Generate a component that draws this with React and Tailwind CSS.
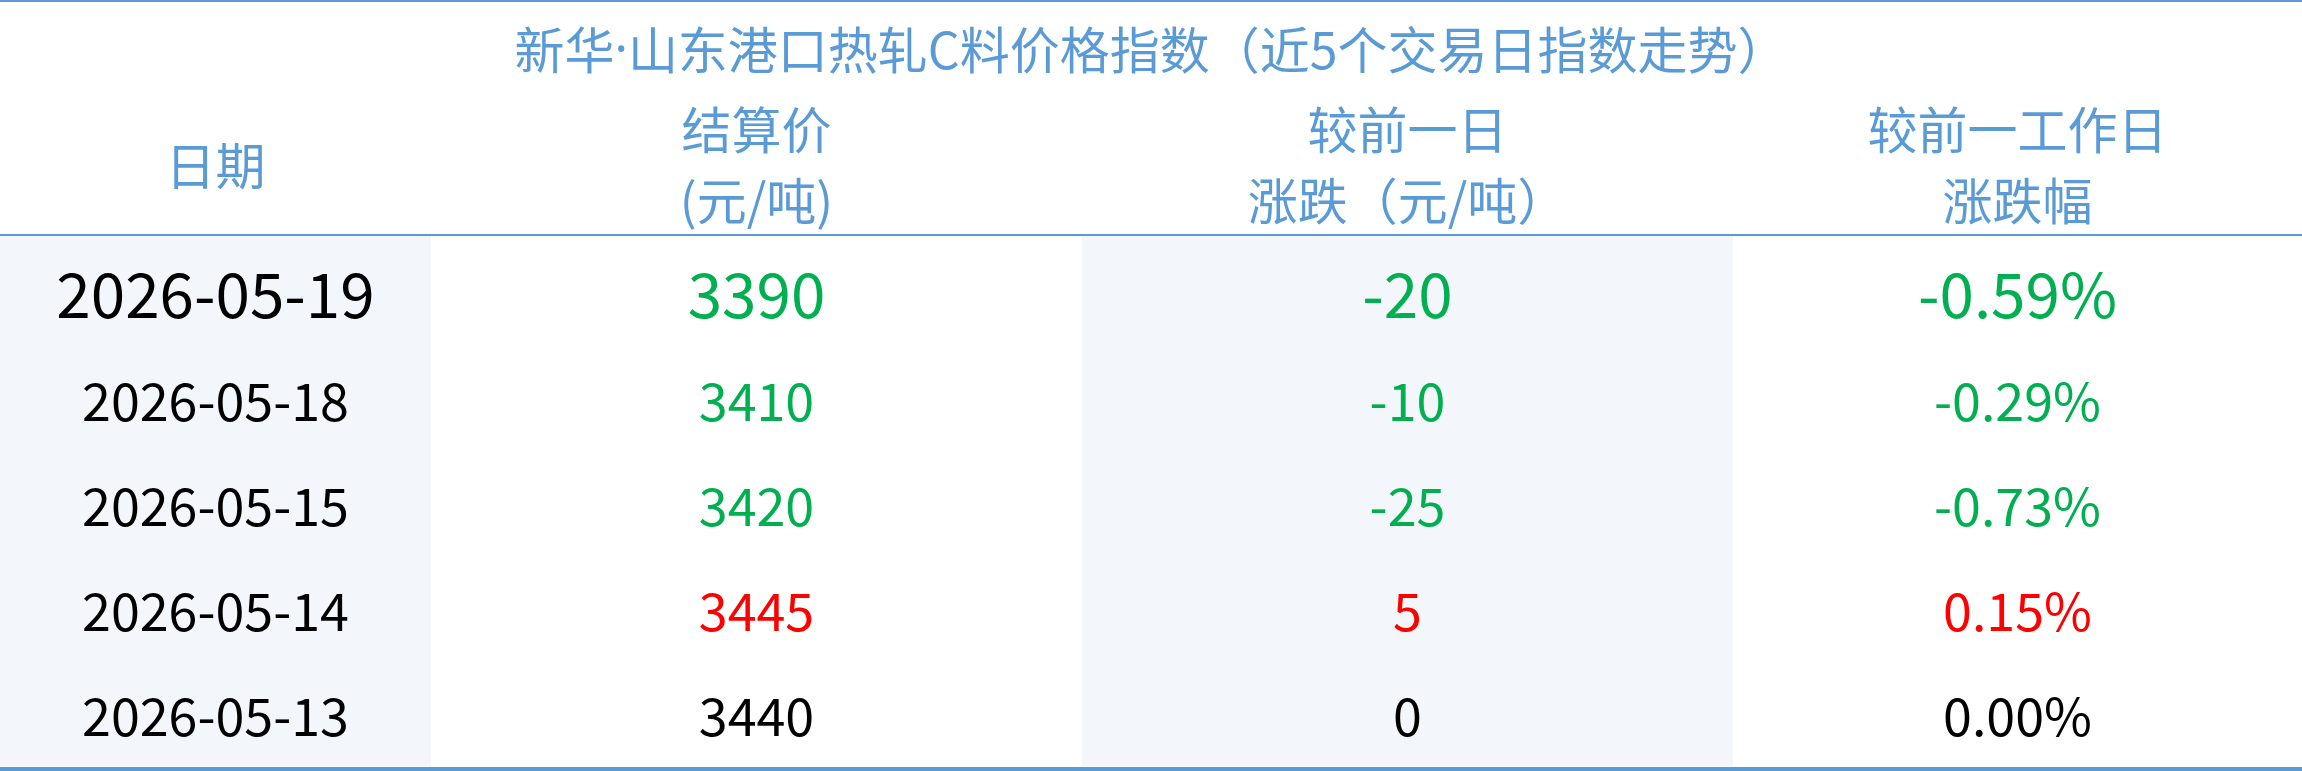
import React from 'react'

const rows = [
  { date: '2026-05-19', price: '3390', diff: '-20', pct: '-0.59%', tone: 'down', big: true },
  { date: '2026-05-18', price: '3410', diff: '-10', pct: '-0.29%', tone: 'down' },
  { date: '2026-05-15', price: '3420', diff: '-25', pct: '-0.73%', tone: 'down' },
  { date: '2026-05-14', price: '3445', diff: '5', pct: '0.15%', tone: 'up' },
  { date: '2026-05-13', price: '3440', diff: '0', pct: '0.00%', tone: 'flat' },
]

const toneClass = {
  down: 'text-[#00b050]',
  up: 'text-[#ff0000]',
  flat: 'text-black',
}

const grid = 'grid grid-cols-[431px_651px_651px_1fr]'

function Row({ row }) {
  const size = row.big ? 'h-[110px] text-[62px]' : 'h-[105px] text-[52px]'
  const color = toneClass[row.tone]
  return (
    <div className={`${grid} ${size}`}>
      <div className="flex items-center justify-center bg-[#f3f6fb] text-black">{row.date}</div>
      <div className={`flex items-center justify-center ${color}`}>{row.price}</div>
      <div className={`flex items-center justify-center bg-[#f3f6fb] ${color}`}>{row.diff}</div>
      <div className={`flex items-center justify-center ${color}`}>{row.pct}</div>
    </div>
  )
}

export default function App() {
  return (
    <div
      className="w-[2302px] h-[771px] bg-white border-t-2 border-b-4 border-[#5b9bd5] overflow-hidden"
      style={{ fontFamily: '"Noto Sans CJK SC", "Noto Sans", sans-serif' }}
    >
      {/* title */}
      <div className="h-[90px] flex items-center justify-center text-[50px] text-[#5b9bd5]">
        新华<span className="font-['Noto_Sans']">·</span>山东港口热轧C料价格指数（近5个交易日指数走势）
      </div>

      {/* header */}
      <div className={`${grid} h-[144px] text-[50px] leading-[71px] text-[#5b9bd5] border-b-2 border-[#5b9bd5]`}>
        <div className="flex items-center justify-center">日期</div>
        <div className="flex flex-col items-center justify-center">
          <span>结算价</span>
          <span>(元/吨)</span>
        </div>
        <div className="flex flex-col items-center justify-center">
          <span>较前一日</span>
          <span>涨跌（元/吨）</span>
        </div>
        <div className="flex flex-col items-center justify-center">
          <span>较前一工作日</span>
          <span>涨跌幅</span>
        </div>
      </div>

      {/* body */}
      {rows.map((row) => (
        <Row key={row.date} row={row} />
      ))}
    </div>
  )
}
